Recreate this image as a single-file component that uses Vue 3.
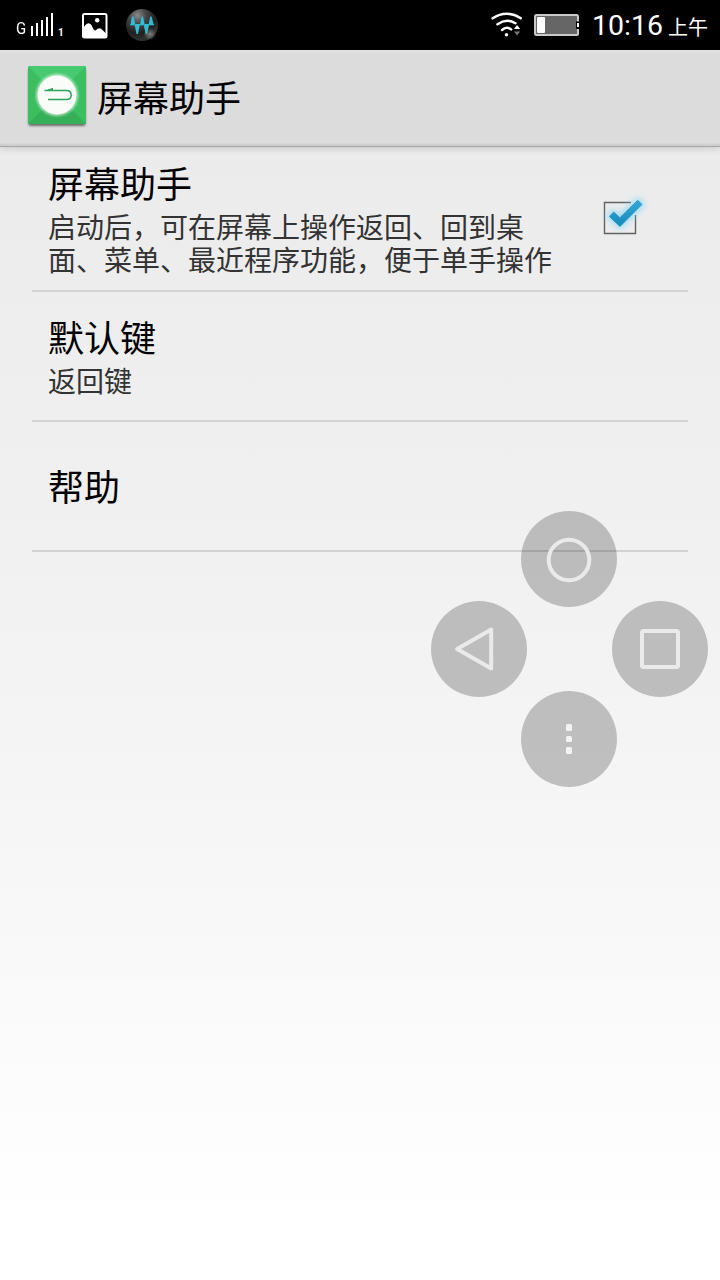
<script setup>
const rows = [
  {
    title: '屏幕助手',
    summary: ['启动后，可在屏幕上操作返回、回到桌', '面、菜单、最近程序功能，便于单手操作'],
    checked: true,
    kind: 'tall',
  },
  { title: '默认键', summary: ['返回键'], kind: 'medium' },
  { title: '帮助', summary: [], kind: 'single' },
]
const signalBars = [10, 13, 16, 19, 23]
</script>

<template>
  <div class="screen">
    <header class="status">
      <div class="signal">
        <span class="network">G</span>
        <span class="bars">
          <i v-for="h in signalBars" :key="h" :style="{ height: h + 'px' }"></i>
        </span>
        <span class="sim">1</span>
      </div>
      <svg class="picture" width="26" height="26" viewBox="0 0 26 26">
        <rect x="1" y="1" width="23.5" height="23.5" rx="1.5" fill="#000" stroke="#fff" stroke-width="2" />
        <circle cx="15.2" cy="7.2" r="2.2" fill="#fff" />
        <path d="M1 15 L3.5 12 Q6.5 8.5 9.5 12 Q11.5 17.5 13.5 17.5 Q17.5 13.5 20.5 17 L24.5 21 V24.5 H1Z" fill="#fff" />
      </svg>
      <svg class="orb" width="34" height="34" viewBox="0 0 34 34">
        <defs>
          <radialGradient id="orbFill" cx=".36" cy=".2" r=".75">
            <stop offset="0" stop-color="#8b8b8b" />
            <stop offset=".35" stop-color="#464646" />
            <stop offset=".75" stop-color="#202020" />
            <stop offset="1" stop-color="#303030" />
          </radialGradient>
          <radialGradient id="orbGlow">
            <stop offset="0" stop-color="#aaa" stop-opacity=".65" />
            <stop offset="1" stop-color="#aaa" stop-opacity="0" />
          </radialGradient>
        </defs>
        <circle cx="17" cy="17" r="16" fill="url(#orbFill)" />
        <circle cx="25" cy="26" r="6.5" fill="url(#orbGlow)" />
        <path d="M5.5 17 L7 8.5 H8.5 L10.5 17Z M15 17 L16.5 8.5 H18 L19.8 17Z M23.5 17 L25.2 8.5 H26.5 L28.8 17Z M9.5 16 L11.5 26 H13 L15 16Z M18.5 16 L20.7 26 H22 L24.3 16Z" fill="#32bdd4" />
        <path d="M5 16.8 H29" stroke="#32bdd4" stroke-width="1" />
      </svg>
      <span class="grow"></span>
      <svg class="wifi" width="32" height="26" viewBox="0 0 32 26">
        <g fill="none" stroke="#fff" stroke-linecap="round">
          <path d="M1.6 6.2 Q15.5 -2.8 29.8 6.2" stroke-width="2.5" />
          <path d="M6.5 12.2 Q15.5 5.8 24.5 11.2" stroke-width="2.5" />
          <path d="M11 18 Q15.5 14 20.2 17.4" stroke-width="2.4" />
        </g>
        <circle cx="15.5" cy="22.7" r="1.7" fill="#fff" />
        <path d="M23 17 L26 13 L29.2 17Z" fill="#fff" />
        <path d="M23 19.5 H29.2 L26 23.5Z" fill="#777" />
      </svg>
      <svg class="battery" width="46" height="23" viewBox="0 0 46 23">
        <rect x="1" y="1" width="43" height="20" rx="1.5" fill="#666" stroke="#c9c9c9" stroke-width="2" />
        <rect x="3" y="3" width="8" height="16" rx="1" fill="#fff" />
        <rect x="42" y="7.5" width="4" height="7.5" fill="#000" />
        <rect x="43" y="9" width="2" height="4" fill="#fff" />
      </svg>
      <span class="clock">10:16</span>
      <span class="meridiem">上午</span>
    </header>

    <div class="titlebar">
      <svg class="logo" width="62" height="64" viewBox="0 0 62 64">
        <defs>
          <clipPath id="tile"><rect x="2" y="1" width="58" height="58" rx="1.5" /></clipPath>
          <filter id="soft" x="-20%" y="-20%" width="140%" height="140%"><feGaussianBlur stdDeviation="1.1" /></filter>
        </defs>
        <rect x="2.5" y="4" width="57" height="57" rx="2" fill="#000" opacity=".5" filter="url(#soft)" />
        <g clip-path="url(#tile)">
          <rect x="2" y="1" width="58" height="58" fill="#3cbd60" />
          <path d="M2 1 H60 L31 30Z" fill="#48cb70" />
          <path d="M60 1 V59 L31 30Z" fill="#3bc061" />
          <path d="M2 59 H60 L31 30Z" fill="#35b058" />
        </g>
        <circle cx="31" cy="30" r="21.2" fill="#fff" opacity=".55" filter="url(#soft)" />
        <circle cx="31" cy="30" r="19.4" fill="#fafcfa" />
        <path d="M18.5 25.4 H40.5 Q45.2 25.4 45.2 30 Q45.2 34.6 40.5 34.6 H22" fill="none" stroke="#2ca457" stroke-width="1.5" />
        <path d="M18 26 L27 22.8 V26Z" fill="#2ca457" />
      </svg>
      <h1>屏幕助手</h1>
    </div>

    <main class="list">
      <section v-for="row in rows" :key="row.title" class="row" :class="row.kind">
        <div class="copy">
          <h2>{{ row.title }}</h2>
          <p v-for="line in row.summary" :key="line">{{ line }}</p>
        </div>
        <svg v-if="row.checked" class="check" width="64" height="64" viewBox="0 0 64 64">
          <defs>
            <linearGradient id="tick" x1="0" y1="0" x2="0" y2="1">
              <stop offset="0" stop-color="#35a9d6" />
              <stop offset="1" stop-color="#1489bb" />
            </linearGradient>
            <filter id="glow" x="-50%" y="-50%" width="200%" height="200%"><feGaussianBlur stdDeviation="3" /></filter>
          </defs>
          <path d="M43 18.5 H16.5 V49.5 H47.5 V31" fill="none" stroke="#626262" stroke-width="1.4" />
          <path d="M21 32 L25.5 27.5 L32 33 L50 16 L54.5 20.5 L32 43Z" fill="#7fd6f5" stroke="#7fd6f5" stroke-width="4" opacity=".75" filter="url(#glow)" />
          <path d="M21.3 32.4 L25.8 28 L31.8 33.8 L49.8 16.3 L53.9 20.4 L32 42.5Z" fill="url(#tick)" stroke="#2892bb" stroke-width=".8" stroke-linejoin="round" />
        </svg>
      </section>
    </main>

    <nav class="pad">
      <span class="key home">
        <svg width="48" height="48" viewBox="0 0 48 48"><circle cx="24" cy="25" r="20.3" /></svg>
      </span>
      <span class="key back">
        <svg width="48" height="48" viewBox="0 0 48 48"><path d="M36.2 4.6 V43.4 L2.2 24Z" /></svg>
      </span>
      <span class="key recent">
        <svg width="48" height="48" viewBox="0 0 48 48"><rect x="6" y="6" width="36" height="36" rx="1.5" /></svg>
      </span>
      <span class="key more"><i></i><i></i><i></i></span>
    </nav>
  </div>
</template>

<style>
body { margin: 0; background: #fff; }
</style>

<style scoped>
.screen {
  position: relative;
  width: 720px;
  height: 1280px;
  overflow: hidden;
  display: flex;
  flex-direction: column;
  background: linear-gradient(#e8e8e8 0, #ececec 200px, #f0f0f0 490px, #f5f5f5 780px, #fff 1220px);
  font-family: "Noto Sans CJK SC", sans-serif;
  color: #000;
}
h1, h2, p { margin: 0; font-weight: 400; white-space: nowrap; }
.status {
  box-sizing: border-box;
  height: 50px;
  flex: none;
  display: flex;
  align-items: center;
  padding: 0 12px 0 16px;
  background: #000;
  color: #fff;
}
.signal { display: flex; align-items: flex-end; height: 24px; width: 66px; }
.network {
  width: 15px;
  margin-bottom: 2px;
  font: 17px/13px Roboto, sans-serif;
  transform: scaleX(.88);
  transform-origin: left bottom;
}
.bars { display: flex; align-items: flex-end; gap: 3px; margin-bottom: 1px; }
.bars i { width: 2px; background: #fff; }
.sim { margin-left: 5px; font: bold 10px/8px Roboto, sans-serif; }
.picture { margin-top: 1px; }
.orb { margin-left: 17px; }
.grow { flex: 1; }
.wifi { margin-right: 11px; margin-top: -1px; }
.battery { margin-right: 12px; }
.clock { width: 76px; font: 28.5px/50px Roboto, sans-serif; padding-top: 2px; white-space: nowrap; }
.meridiem { font-size: 20px; line-height: 50px; padding-top: 3px; width: 40px; white-space: nowrap; }
.titlebar {
  position: relative;
  box-sizing: border-box;
  height: 97px;
  flex: none;
  display: flex;
  align-items: flex-start;
  padding: 15px 0 0 26px;
  background: linear-gradient(#e1e1e1, #dcdcdc 6px, #dcdcdc 93px, #cfcfcf 94px, #cfcfcf);
  border-bottom: 1px solid #a6a6a6;
  box-shadow: 0 1px 8px rgba(0, 0, 0, .16);
}
h1 { margin: 5px 0 0 9px; font-size: 36px; line-height: 53px; }
.list { padding: 0 32px; }
.row {
  box-sizing: border-box;
  display: flex;
  justify-content: space-between;
  height: 130px;
  padding-left: 16px;
  border-bottom: 2px solid #d3d3d3;
}
.tall { height: 145px; padding-top: 11px; }
.medium { padding-top: 20px; }
.single { padding-top: 39px; }
h2 { font-size: 36px; line-height: 48px; }
p { font-size: 28px; line-height: 33px; color: #333; }
h2 + p { margin-top: 4px; }
.check { flex: none; margin: 26px 36px 0 0; }
.pad { position: absolute; left: 431px; top: 511px; width: 277px; height: 276px; }
.key {
  position: absolute;
  width: 96px;
  height: 96px;
  border-radius: 50%;
  background: rgba(0, 0, 0, .22);
  display: flex;
  flex-direction: column;
  align-items: center;
  justify-content: center;
}
.key svg { fill: none; stroke: #eaeaea; stroke-width: 4; stroke-linejoin: round; }
.home { left: 90px; top: 0; }
.back { left: 0; top: 90px; }
.recent { left: 181px; top: 90px; }
.more { left: 90px; top: 180px; gap: 5px; }
.more i { width: 6.5px; height: 6.5px; border-radius: 1.5px; background: #f3f3f3; }
</style>
